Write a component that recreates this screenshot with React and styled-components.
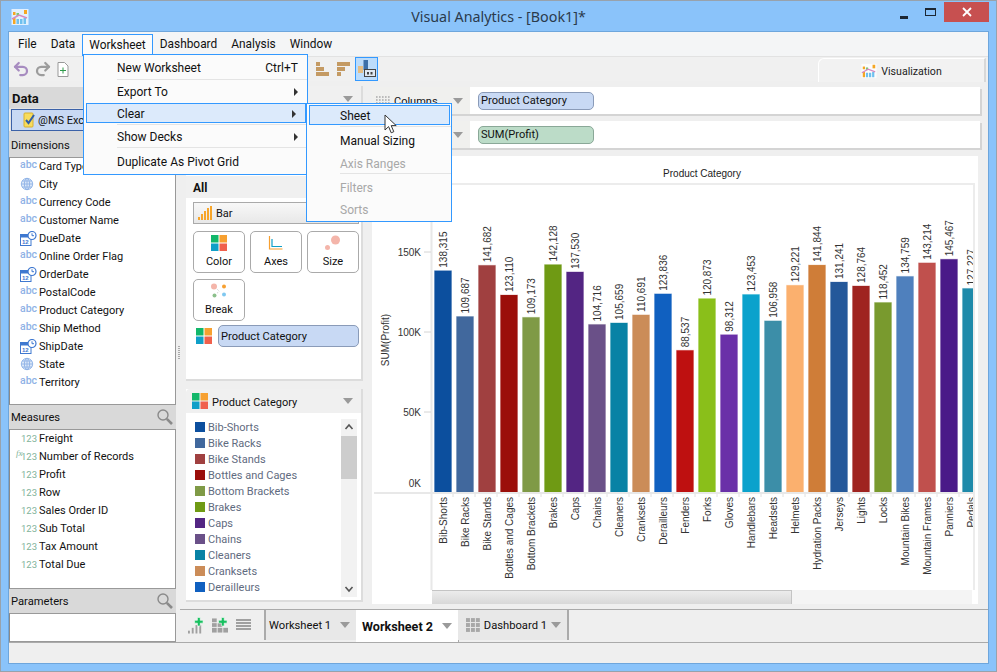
import React from "react";
import styled, { createGlobalStyle } from "styled-components";
import { Undo2, Redo2 } from "lucide-react";

const GlobalStyle = createGlobalStyle`
  html, body {
    margin: 0;
    padding: 0;
    background: #8ac3fa;
  }
  * {
    box-sizing: border-box;
  }
`;

const Frame = styled.div`
  position: relative;
  width: 997px;
  height: 672px;
  overflow: hidden;
  display: flex;
  flex-direction: column;
  background: #8ac3fa;
  border: 1px solid #98a2ac;
  font-family: Roboto, "Liberation Sans", sans-serif;
  font-size: 11.5px;
  color: #111;
`;

const TitleBar = styled.div`
  position: relative;
  height: 30px;
  flex: none;
  display: flex;
  align-items: center;
  justify-content: center;
  font-family: "Noto Sans", sans-serif;
  font-size: 14.3px;
  color: #2a3a4c;
  padding-top: 1px;
`;

const AppLogo = styled.div`
  position: absolute;
  left: 10px;
  top: 7px;
  display: flex;
`;

const WindowButtons = styled.div`
  position: absolute;
  right: 7px;
  top: 1px;
  display: flex;
  align-items: center;
`;

const MinButton = styled.div`
  width: 8px;
  height: 3px;
  background: #1c2733;
  margin: 10px 17px 0 0;
`;

const MaxButton = styled.div`
  width: 11px;
  height: 8px;
  border: 1px solid #1c2733;
  border-top-width: 2px;
  margin-right: 8px;
`;

const CloseButton = styled.div`
  width: 45px;
  height: 20px;
  background: #c75050;
  display: flex;
  align-items: center;
  justify-content: center;
`;

const Content = styled.div`
  flex: none;
  width: 981px;
  height: 633px;
  margin-left: 7px;
  border: 1px solid #6ea6dc;
  background: #efefef;
  display: flex;
  flex-direction: column;
`;

const MenuBar = styled.div`
  height: 25px;
  flex: none;
  display: flex;
  background: #f4f5f6;
  border-bottom: 1px solid #e2e2e2;
  padding-left: 2px;
`;

const MenuItem = styled.div`
  height: ${(p) => (p.$open ? "22px" : "24px")};
  margin-top: ${(p) => (p.$open ? "2px" : "0")};
  padding: ${(p) => (p.$open ? "3px 6px 0" : "5px 7px 0")};
  border: ${(p) => (p.$open ? "1px solid #3399ff" : "none")};
  border-bottom: none;
  background: ${(p) => (p.$open ? "#fbfbfb" : "transparent")};
  font-size: 11.9px;
`;

const Toolbar = styled.div`
  height: 24px;
  flex: none;
  display: flex;
  align-items: center;
  padding-left: 3px;
  background: #f0f0f0;
  position: relative;
`;

const ToolIcon = styled.div`
  display: flex;
  align-items: center;
  justify-content: center;
  margin-left: ${(p) => p.$gap || 0}px;
  width: ${(p) => p.$w || 16}px;
  height: ${(p) => p.$h || 16}px;
  border: ${(p) => (p.$active ? "1px solid #3399ff" : "none")};
  background: ${(p) => (p.$active ? "#bcdcfb" : "transparent")};
`;

const VisTab = styled.div`
  position: absolute;
  right: 2px;
  top: 1px;
  width: 168px;
  height: 24px;
  border: 1px solid #fff;
  border-bottom: none;
  border-right: 2px solid #d8d8d8;
  border-top-left-radius: 6px;
  background: #f2f2f2;
  display: flex;
  align-items: center;
  justify-content: center;
  gap: 4px;
  padding-top: 1px;
  font-size: 10.6px;
  color: #222;
`;

const Body = styled.div`
  height: 561px;
  flex: none;
  display: flex;
`;

const LeftColumn = styled.div`
  width: 167px;
  flex: none;
  display: flex;
  flex-direction: column;
  padding-top: 6px;
`;

const DataHeader = styled.div`
  height: 22px;
  flex: none;
  background: #d9d9d9;
  font-weight: 700;
  font-size: 13px;
  padding: 4px 3px;
`;

const SourceRow = styled.div`
  height: 22px;
  flex: none;
  margin: 0 0 0 2px;
  padding-left: 11px;
  display: flex;
  align-items: center;
  gap: 3px;
  background: #c8d9f4;
  border: 1px solid #3c62a8;
  outline: 1px solid #e4e4e4;
  font-size: 11px;
`;

const PanelHeader = styled.div`
  height: ${(p) => p.$h}px;
  flex: none;
  background: #d9d9d9;
  display: flex;
  align-items: center;
  justify-content: space-between;
  padding: ${(p) => p.$pt || 0}px 2px 0;
  font-size: 11.2px;
`;

const FieldList = styled.div`
  height: ${(p) => p.$h}px;
  flex: none;
  background: #fff;
  border: 1px solid #999;
  border-left-color: #8a8a8a;
`;

const Field = styled.div`
  height: 18px;
  padding-bottom: 2px;
  display: flex;
  align-items: center;
  font-size: 11px;
  white-space: nowrap;
`;

const FieldIconBox = styled.div`
  width: 29px;
  flex: none;
  padding-left: 10px;
  display: flex;
  align-items: center;
  position: relative;
`;

const TypeMark = styled.span`
  font-size: ${(p) => (p.$num ? "9.5px" : "10.5px")};
  line-height: 1;
  font-weight: ${(p) => (p.$num ? 400 : 500)};
  color: ${(p) => (p.$num ? "#7fb39a" : "#8fb2e6")};
  margin-left: ${(p) => (p.$num ? "1px" : "0")};
  margin-top: ${(p) => (p.$num ? "1px" : "-1px")};
`;

const FxMark = styled.span`
  position: absolute;
  left: 6px;
  top: -3px;
  font-family: "Liberation Serif", serif;
  font-style: italic;
  font-size: 9px;
  color: #7fb39a;
`;

const WorkArea = styled.div`
  flex: 1;
  min-width: 0;
  display: flex;
  flex-direction: column;
  margin-left: 4px;
`;

const Main = styled.div`
  height: 528px;
  flex: none;
  display: flex;
`;

const Splitter = styled.div`
  width: 6px;
  flex: none;
  display: flex;
  align-items: center;
  padding-bottom: 4px;
`;

const Grip = styled.div`
  width: 2px;
  height: 14px;
  margin-top: 20px;
  margin-left: -2px;
  background: repeating-linear-gradient(to bottom, #aaa 0 1px, transparent 1px 2px);
`;

const MiddleColumn = styled.div`
  width: 177px;
  flex: none;
  display: flex;
  flex-direction: column;
  padding-top: 5px;
`;

const Panel = styled.div`
  background: #fff;
  height: ${(p) => p.$h}px;
  flex: none;
  margin-bottom: ${(p) => p.$mb || 0}px;
  border-right: 2px solid #dcdcdc;
  border-bottom: 2px solid #dcdcdc;
`;

const UpperHeader = styled.div`
  height: 26px;
  background: #f0f0f0;
  display: flex;
  justify-content: flex-end;
  align-items: center;
  padding-right: 8px;
`;

const Caret = styled.div`
  width: 0;
  height: 0;
  flex: none;
  border-left: 5px solid transparent;
  border-right: 5px solid transparent;
  border-top: 6px solid #9a9a9a;
`;

const MarksHeader = styled.div`
  height: 22px;
  margin-top: 2px;
  background: #f0f0f0;
  font-weight: 700;
  font-size: 12px;
  padding: 5px 7px 0;
`;

const MarkBody = styled.div`
  padding: 4px 2px 0 7px;
`;

const TypeSelect = styled.div`
  height: 22px;
  border: 1px solid #aaa;
  background: linear-gradient(#f8f8f8, #e8e8e8);
  display: flex;
  align-items: center;
  gap: 4px;
  padding-left: 4px;
  font-size: 11px;
`;

const MarkGrid = styled.div`
  display: grid;
  grid-template-columns: repeat(3, 52px);
  column-gap: 5px;
  row-gap: 6px;
  margin-top: 7px;
`;

const MarkButton = styled.div`
  height: 42px;
  border: 1px solid #aaa;
  border-radius: 5px;
  background: #fff;
  display: flex;
  flex-direction: column;
  align-items: center;
  padding-top: 3px;
  font-size: 11px;
  line-height: 14px;
  gap: 4px;
`;

const EncodingRow = styled.div`
  display: flex;
  align-items: center;
  gap: 6px;
  margin: 4px 0 0 3px;
`;

const Pill = styled.div`
  height: ${(p) => p.$h || 18}px;
  width: ${(p) => p.$w}px;
  flex: none;
  border: 1px solid ${(p) => (p.$green ? "#8aa898" : "#8a9bb8")};
  border-radius: 5px;
  background: ${(p) => (p.$green ? "#bcdcc8" : "#c8d9f4")};
  padding-left: 2px;
  display: flex;
  align-items: center;
  font-size: 11.1px;
  white-space: nowrap;
`;

const LegendHeader = styled.div`
  height: 24px;
  background: #f0f0f0;
  display: flex;
  align-items: center;
  gap: 4px;
  padding: 0 8px 0 6px;
  border-top-left-radius: 4px;
`;

const LegendTitle = styled.span`
  flex: 1;
  font-size: 11px;
  padding-top: 2px;
`;

const LegendBody = styled.div`
  display: flex;
  padding: 6px 4px 0 9px;
`;

const LegendList = styled.div`
  flex: 1;
`;

const LegendItem = styled.div`
  height: 16px;
  display: flex;
  align-items: center;
  gap: 3px;
  font-size: 11px;
  color: #5f6b80;
`;

const Swatch = styled.div`
  width: 10px;
  height: 10px;
  flex: none;
  background: ${(p) => p.$color};
`;

const LegendScroll = styled.div`
  width: 16px;
  height: 178px;
  flex: none;
  background: #f2f2f2;
  display: flex;
  flex-direction: column;
  align-items: center;
  justify-content: space-between;
  position: relative;
`;

const ScrollThumb = styled.div`
  position: absolute;
  left: 0;
  top: 17px;
  width: 16px;
  height: 43px;
  background: #cdcdcd;
`;

const ChartColumn = styled.div`
  width: 610px;
  flex: none;
  margin-left: 9px;
  padding-top: 6px;
  display: flex;
  flex-direction: column;
  gap: 7px;
`;

const Shelf = styled.div`
  height: 27px;
  flex: none;
  margin-right: 2px;
  background: #fff;
  display: flex;
  align-items: center;
  box-shadow: 2px 2px 0 #d4d4d4;
`;

const ShelfLabel = styled.div`
  width: 98px;
  height: 100%;
  flex: none;
  background: #f0f0ee;
  display: flex;
  align-items: center;
  padding: 0 7px 0 4px;
  gap: 4px;
  margin-right: 8px;
`;

const ShelfName = styled.span`
  flex: 1;
  font-size: 11px;
  padding-top: 2px;
`;

const ChartPanel = styled.div`
  width: 606px;
  height: 448px;
  margin-top: 1px;
  flex: none;
  background: #fff;
  display: flex;
  flex-direction: column;
`;

const ChartSvg = styled.svg`
  display: block;
  flex: none;
  font-family: "Liberation Sans", Arial, sans-serif;
`;

const HScroll = styled.div`
  height: 14px;
  margin: 0 6px 0 60px;
  background: #f4f4f4;
`;

const HThumb = styled.div`
  width: 360px;
  height: 14px;
  background: linear-gradient(#ececec, #d8d8d8);
  border-top: 1px solid #c4c4c4;
  border-right: 1px solid #c4c4c4;
`;

const TabBar = styled.div`
  height: 33px;
  flex: none;
  display: flex;
  align-items: stretch;
  border-top: 1px solid #aaa;
  padding-left: 8px;
  background: #efefef;
`;

const TabTools = styled.div`
  display: flex;
  align-items: center;
  gap: 8px;
  width: 76px;
  padding-bottom: 2px;
  flex: none;
`;

const Tab = styled.div`
  height: ${(p) => (p.$active ? "32px" : "30px")};
  display: flex;
  align-items: center;
  gap: ${(p) => p.$gap || 0}px;
  width: ${(p) => p.$w}px;
  flex: none;
  padding: 0 6px 0 ${(p) => p.$pl || 3}px;
  background: ${(p) => (p.$active ? "#fff" : "#e8e8e8")};
  font-weight: ${(p) => (p.$active ? 700 : 400)};
  font-size: ${(p) => (p.$active ? "12.6px" : "11.2px")};
  white-space: nowrap;
  border-left: ${(p) => (p.$divider ? "2px solid #aaa" : "none")};
  border-right: ${(p) => (p.$end ? "2px solid #aaa" : "none")};
  box-shadow: ${(p) => (p.$active ? "1px 1px 0 #aaa" : "none")};
`;

const TabName = styled.span`
  flex: 1;
`;

const StatusBar = styled.div`
  flex: 1;
  border-top: 1px solid #aaa;
  background: #efefef;
`;

const DropMenu = styled.div`
  position: absolute;
  left: ${(p) => p.$x}px;
  top: ${(p) => p.$y}px;
  width: ${(p) => p.$w}px;
  height: ${(p) => p.$h}px;
  background: #fbfbfb;
  border: 1px solid #3399ff;
  z-index: 5;
`;

const DropItem = styled.div`
  height: ${(p) => p.$h}px;
  margin: ${(p) => (p.$hot ? "1px 1px 1px 2px" : "0")};
  padding: 2px 9px 0 ${(p) => (p.$hot ? p.$indent - 3 : p.$indent)}px;
  display: flex;
  align-items: center;
  justify-content: space-between;
  font-size: 12px;
  color: ${(p) => (p.$off ? "#a8a8a8" : "#111")};
  background: ${(p) => (p.$hot ? "#dceafb" : "transparent")};
  border: ${(p) => (p.$hot ? "1px solid #3399ff" : "none")};
`;

const DropLine = styled.div`
  height: 1px;
  background: #e4e4e4;
  margin-left: ${(p) => p.$indent}px;
`;

const SubArrow = styled.div`
  width: 0;
  height: 0;
  border-top: 4px solid transparent;
  border-bottom: 4px solid transparent;
  border-left: 4px solid #333;
`;

const Pointer = styled.svg`
  position: absolute;
  left: 383px;
  top: 113px;
  z-index: 6;
`;

const dimensions = [
  ["abc", "Card Type"],
  ["globe", "City"],
  ["abc", "Currency Code"],
  ["abc", "Customer Name"],
  ["date", "DueDate"],
  ["abc", "Online Order Flag"],
  ["date", "OrderDate"],
  ["abc", "PostalCode"],
  ["abc", "Product Category"],
  ["abc", "Ship Method"],
  ["date", "ShipDate"],
  ["globe", "State"],
  ["abc", "Territory"],
];

const measures = ["Freight", "Number of Records", "Profit", "Row", "Sales Order ID", "Sub Total", "Tax Amount", "Total Due"];

const categories = [
  ["Bib-Shorts", 138315, "#0c4f9e"],
  ["Bike Racks", 109687, "#41689d"],
  ["Bike Stands", 141682, "#a04040"],
  ["Bottles and Cages", 123110, "#9b0e0a"],
  ["Bottom Brackets", 109173, "#7f9a46"],
  ["Brakes", 142128, "#6f9a14"],
  ["Caps", 137530, "#532583"],
  ["Chains", 104716, "#6a5088"],
  ["Cleaners", 105659, "#0882a5"],
  ["Cranksets", 110691, "#cb8c58"],
  ["Derailleurs", 123836, "#1060c0"],
  ["Fenders", 88537, "#be1010"],
  ["Forks", 120873, "#8abf1a"],
  ["Gloves", 98312, "#6a30a8"],
  ["Handlebars", 123453, "#0ba2cc"],
  ["Headsets", 106958, "#3c8ea8"],
  ["Helmets", 129221, "#fbb06e"],
  ["Hydration Packs", 141844, "#cf7d38"],
  ["Jerseys", 131241, "#24589a"],
  ["Lights", 128764, "#9f2420"],
  ["Locks", 118452, "#799a2e"],
  ["Mountain Bikes", 134759, "#4f80bd"],
  ["Mountain Frames", 143214, "#c0504d"],
  ["Panniers", 145467, "#4a1a88"],
  ["Pedals", 127227, "#1f8aaa"],
];

const LogoIcon = ({ size = 18 }) => (
  <svg width={size} height={size} viewBox="0 0 18 18">
    <rect x="0.5" y="1" width="17" height="16" fill="#fff" opacity="0.75" />
    <rect x="2" y="10" width="2.5" height="6" fill="#f5a623" />
    <rect x="5.5" y="5" width="2.5" height="3" fill="#7cc576" />
    <rect x="5.5" y="11" width="2.5" height="5" fill="#6fc0ee" />
    <rect x="9" y="11" width="2.5" height="5" fill="#6fc0ee" />
    <rect x="12.5" y="10" width="2.5" height="6" fill="#6fc0ee" />
    <rect x="13" y="2" width="3" height="4" fill="#f5a623" />
    <rect x="2" y="4" width="2.5" height="3" fill="#f5a623" />
    <path d="M1 11 L8 7 L16 10" stroke="#d58ac0" strokeWidth="1.5" fill="none" />
  </svg>
);

const GlobeIcon = () => (
  <svg width="14" height="14" viewBox="0 0 14 14" fill="none" stroke="#8fb2e6" strokeWidth="0.9">
    <circle cx="7" cy="7" r="5.7" fill="#dce8f8" />
    <ellipse cx="7" cy="7" rx="2.6" ry="5.7" />
    <path d="M1.3 7h11.4M2 4h10M2 10h10M7 1.3v11.4" />
  </svg>
);

const DateIcon = () => (
  <svg width="17" height="15" viewBox="0 0 17 15">
    <rect x="0.5" y="3.5" width="10.5" height="11" fill="#fff" stroke="#3f78d0" />
    <rect x="0.5" y="3.5" width="10.5" height="3" fill="#3f78d0" />
    <text x="2" y="13" fontSize="6" fontWeight="700" fill="#3f78d0" fontFamily="Liberation Sans">12</text>
    <circle cx="12" cy="4.5" r="4" fill="#fff" stroke="#3f78d0" strokeWidth="1.2" />
    <path d="M12 2.3v2.4h2" stroke="#3f78d0" fill="none" />
  </svg>
);

const SearchIcon = () => (
  <svg width="18" height="18" viewBox="0 0 18 18" fill="none" stroke="#8a8a8a">
    <circle cx="7" cy="7" r="5" strokeWidth="1.4" />
    <path d="M10.8 10.8 L16 16" strokeWidth="2.6" />
  </svg>
);

const QuadIcon = ({ size = 16 }) => {
  const cell = size / 2 - 0.5;
  return (
    <svg width={size} height={size} viewBox={`0 0 ${size} ${size}`}>
      <rect x="0" y="0" width={cell} height={cell} fill="#12b76a" />
      <rect x={size - cell} y="0" width={cell} height={cell} fill="#f7a030" />
      <rect x="0" y={size - cell} width={cell} height={cell} fill="#0f9fc8" />
      <rect x={size - cell} y={size - cell} width={cell} height={cell} fill="#f0604c" />
    </svg>
  );
};

const AxesIcon = () => (
  <svg width="16" height="16" viewBox="0 0 16 16" fill="none">
    <path d="M1.5 1v13h13" stroke="#f7a030" strokeWidth="1.2" />
    <path d="M4 4v7.5h10" stroke="#0f9fc8" strokeWidth="1.2" />
  </svg>
);

const SizeIcon = () => (
  <svg width="16" height="16" viewBox="0 0 16 16" fill="#f4b5aa">
    <circle cx="10.5" cy="5" r="4.5" />
    <circle cx="2.5" cy="12.5" r="2.5" />
  </svg>
);

const BreakIcon = () => (
  <svg width="16" height="16" viewBox="0 0 16 16">
    <circle cx="3" cy="3.5" r="3" fill="#f4b5aa" />
    <circle cx="13" cy="3.5" r="2" fill="#f7a030" />
    <circle cx="3.5" cy="12.5" r="2" fill="#8cc08c" />
    <circle cx="13" cy="11.5" r="2" fill="#80c8f0" />
    <path d="M6 6l3 3M6 10l2-1" stroke="#bbb" strokeWidth="0.7" strokeDasharray="1 1" />
  </svg>
);

const BarTypeIcon = () => (
  <svg width="14" height="14" viewBox="0 0 14 14" fill="#f7a52a">
    <rect x="0" y="11" width="2" height="3" />
    <rect x="3" y="8" width="2" height="6" />
    <rect x="6" y="5" width="2" height="9" />
    <rect x="9" y="2" width="2" height="12" />
    <rect x="12" y="0" width="2" height="14" />
  </svg>
);

const SourceIcon = () => (
  <svg width="12" height="16" viewBox="0 0 12 16">
    <rect x="1" y="1" width="9" height="14" rx="1" fill="#f8dc5c" stroke="#d8b030" />
    <path d="M3 8l2.5 3L11 3" stroke="#2f5ea8" strokeWidth="2" fill="none" />
  </svg>
);

const BrandBars = ({ flip }) => (
  <svg width="14" height="14" viewBox="0 0 14 14" fill="#c49a63">
    {flip ? (
      <>
        <rect x="0" y="0" width="13" height="4" />
        <rect x="0" y="5" width="8" height="4" />
        <rect x="0" y="10" width="4" height="4" />
      </>
    ) : (
      <>
        <rect x="0" y="0" width="4" height="4" />
        <rect x="0" y="5" width="8" height="4" />
        <rect x="0" y="10" width="13" height="4" />
      </>
    )}
  </svg>
);

const SortLabelIcon = () => (
  <svg width="18" height="18" viewBox="0 0 18 18">
    <rect x="0" y="6" width="5" height="7" fill="#e4bd84" />
    <rect x="5.5" y="0" width="4.5" height="10" fill="#3d6fa8" />
    <rect x="6.5" y="9.5" width="11" height="7" fill="#dfe8f2" stroke="#444" />
    <rect x="9" y="12" width="2" height="2.5" fill="#444" />
    <rect x="12.5" y="12" width="2" height="2.5" fill="#444" />
  </svg>
);

const NewDocIcon = () => (
  <svg width="12" height="15" viewBox="0 0 12 15" fill="none">
    <path d="M1 .5h6.5L11 4v10.5H1z" fill="#fff" stroke="#999" />
    <path d="M6 5.5v6M3 8.5h6" stroke="#2e9a4a" />
  </svg>
);

const GridDots = () => (
  <svg width="14" height="10" viewBox="0 0 14 10" fill="#bbb">
    {[0, 3, 6, 9, 12].map((x) =>
      [0, 3, 6, 9].map((y) => <rect key={`${x}${y}`} x={x} y={y} width="1.6" height="2" />)
    )}
  </svg>
);

const PlusBadge = () => (
  <path d="M10 0h3v3h3v3h-3v3h-3V6H7V3h3z" fill="#18c060" stroke="#fff" strokeWidth="0.6" />
);

const AddChartIcon = () => (
  <svg width="16" height="17" viewBox="0 0 17 17" fill="#a0a0a0">
    <rect x="0" y="14" width="2" height="3" />
    <rect x="4" y="11" width="2" height="6" />
    <rect x="8" y="8" width="2" height="9" />
    <rect x="12" y="8" width="2" height="9" />
    <PlusBadge />
  </svg>
);

const AddDashIcon = () => (
  <svg width="16" height="17" viewBox="0 0 17 17" fill="#a0a0a0">
    <rect x="0" y="1" width="5" height="4" />
    <rect x="0" y="6" width="5" height="4" />
    <rect x="6" y="6" width="5" height="4" />
    <rect x="0" y="11" width="5" height="5" />
    <rect x="6" y="11" width="5" height="5" />
    <rect x="12" y="11" width="5" height="5" />
    <PlusBadge />
  </svg>
);

const ListIcon = () => (
  <svg width="15" height="12" viewBox="0 0 15 12" fill="#a0a0a0">
    {[0, 3, 6, 9].map((y) => <rect key={y} x="0" y={y} width="15" height="2" />)}
  </svg>
);

const DashIcon = () => (
  <svg width="14" height="14" viewBox="0 0 14 14" fill="#a8a8a8">
    {[0, 5, 10].map((x) =>
      [0, 5, 10].map((y) => <rect key={`${x}${y}`} x={x} y={y} width="4" height="4" />)
    )}
  </svg>
);

const Chevron = ({ up }) => (
  <svg width="10" height="16" viewBox="0 0 10 16" fill="none" stroke="#555" strokeWidth="1.6">
    <path d={up ? "M1.5 10l3.5-4 3.5 4" : "M1.5 6l3.5 4 3.5-4"} />
  </svg>
);

const Chart = () => {
  const base = 492;
  const scale = 80 / 50000;
  return (
    <ChartSvg width="606" height="434" viewBox="372 156 606 434">
      <defs>
        <clipPath id="plot">
          <rect x="372" y="183" width="601" height="410" />
        </clipPath>
      </defs>
      <text x="702" y="177" fontSize="10" textAnchor="middle" fill="#222">Product Category</text>
      <path d="M431 184H974" stroke="#ececec" strokeWidth="2" />
      <path d="M431.5 183V590" stroke="#e8e8e8" strokeWidth="2" />
      <path d="M974 183V590" stroke="#ececec" strokeWidth="2" />
      {[[150, 252], [100, 332], [50, 412]].map(([v, y]) => (
        <g key={v}>
          <path d={`M424 ${y}H431`} stroke="#d4d4d4" />
          <text x="421" y={y + 3.5} fontSize="10" textAnchor="end" fill="#333">{v}K</text>
        </g>
      ))}
      <text x="421" y="487" fontSize="10" textAnchor="end" fill="#333">0K</text>
      <text transform="rotate(-90 389 340)" x="389" y="340" fontSize="10" textAnchor="middle" fill="#333">SUM(Profit)</text>
      <g clipPath="url(#plot)">
        {categories.map(([name, value, color], i) => {
          const x = 434.5 + 22 * i;
          const h = value * scale;
          const cx = x + 8.5;
          return (
            <g key={name}>
              <rect x={x} y={base - h} width="17" height={h} fill={color} stroke={color} strokeOpacity="0.25" />
              <text
                transform={`rotate(-90 ${cx + 4} ${base - h - 3})`}
                x={cx + 4}
                y={base - h - 3}
                fontSize="10"
                fill="#333"
              >
                {value.toLocaleString("en-US")}
              </text>
              <path d={`M${x + 18.5} 493V497`} stroke="#e0e0e0" />
              <text
                transform={`rotate(-90 ${cx + 4} 497)`}
                x={cx + 4}
                y="497"
                fontSize="10"
                textAnchor="end"
                fill="#333"
              >
                {name}
              </text>
            </g>
          );
        })}
      </g>
      <path d="M374 493H973" stroke="#e8e8e8" strokeWidth="2" />
    </ChartSvg>
  );
};

const Legend = () => (
  <LegendList>
    {categories.slice(0, 11).map(([name, , color]) => (
      <LegendItem key={name}>
        <Swatch $color={color} />
        {name}
      </LegendItem>
    ))}
  </LegendList>
);

export default function App() {
  return (
    <>
      <GlobalStyle />
      <Frame>
        <TitleBar>
          <AppLogo><LogoIcon /></AppLogo>
          Visual Analytics - [Book1]*
          <WindowButtons>
            <MinButton />
            <MaxButton />
            <CloseButton>
              <svg width="10" height="10" viewBox="0 0 10 10" stroke="#fff" strokeWidth="1.8">
                <path d="M1 1l8 8M9 1l-8 8" />
              </svg>
            </CloseButton>
          </WindowButtons>
        </TitleBar>
        <Content>
          <MenuBar>
            <MenuItem>File</MenuItem>
            <MenuItem>Data</MenuItem>
            <MenuItem $open>Worksheet</MenuItem>
            <MenuItem>Dashboard</MenuItem>
            <MenuItem>Analysis</MenuItem>
            <MenuItem>Window</MenuItem>
          </MenuBar>
          <Toolbar>
            <ToolIcon $w={18}><Undo2 size={18} color="#a78cc0" strokeWidth={3} /></ToolIcon>
            <ToolIcon $gap={4} $w={18}><Redo2 size={18} color="#9c9c9c" strokeWidth={3} /></ToolIcon>
            <ToolIcon $gap={5} $w={12}><NewDocIcon /></ToolIcon>
            <ToolIcon $gap={246}><BrandBars /></ToolIcon>
            <ToolIcon $gap={5}><BrandBars flip /></ToolIcon>
            <ToolIcon $gap={3} $w={23} $h={24} $active><SortLabelIcon /></ToolIcon>
            <VisTab><LogoIcon size={16} />Visualization</VisTab>
          </Toolbar>
          <Body>
            <LeftColumn>
              <DataHeader>Data</DataHeader>
              <SourceRow><SourceIcon />@MS Excel</SourceRow>
              <PanelHeader $h={26} $pt={2}>Dimensions</PanelHeader>
              <FieldList $h={248}>
                {dimensions.map(([type, name]) => (
                  <Field key={name}>
                    <FieldIconBox>
                      {type === "abc" && <TypeMark>abc</TypeMark>}
                      {type === "globe" && <GlobeIcon />}
                      {type === "date" && <DateIcon />}
                    </FieldIconBox>
                    {name}
                  </Field>
                ))}
              </FieldList>
              <PanelHeader $h={24}>Measures<SearchIcon /></PanelHeader>
              <FieldList $h={160}>
                {measures.map((name) => (
                  <Field key={name}>
                    <FieldIconBox>
                      {name === "Number of Records" && <FxMark>fx</FxMark>}
                      <TypeMark $num>123</TypeMark>
                    </FieldIconBox>
                    {name}
                  </Field>
                ))}
              </FieldList>
              <PanelHeader $h={24}>Parameters<SearchIcon /></PanelHeader>
              <FieldList $h={29} />
            </LeftColumn>
            <WorkArea>
              <Main>
                <Splitter><Grip /></Splitter>
                <MiddleColumn>
                  <Panel $h={84} $mb={4}>
                    <UpperHeader><Caret /></UpperHeader>
                  </Panel>
                  <Panel $h={207} $mb={8}>
                    <MarksHeader>All</MarksHeader>
                    <MarkBody>
                      <TypeSelect><BarTypeIcon />Bar</TypeSelect>
                      <MarkGrid>
                        <MarkButton><QuadIcon />Color</MarkButton>
                        <MarkButton><AxesIcon />Axes</MarkButton>
                        <MarkButton><SizeIcon />Size</MarkButton>
                        <MarkButton><BreakIcon />Break</MarkButton>
                      </MarkGrid>
                      <EncodingRow>
                        <QuadIcon />
                        <Pill $w={141} $h={22}>Product Category</Pill>
                      </EncodingRow>
                    </MarkBody>
                  </Panel>
                  <Panel $h={213}>
                    <LegendHeader>
                      <QuadIcon />
                      <LegendTitle>Product Category</LegendTitle>
                      <Caret />
                    </LegendHeader>
                    <LegendBody>
                      <Legend />
                      <LegendScroll>
                        <Chevron up />
                        <ScrollThumb />
                        <Chevron />
                      </LegendScroll>
                    </LegendBody>
                  </Panel>
                </MiddleColumn>
                <ChartColumn>
                  <Shelf>
                    <ShelfLabel>
                      <GridDots />
                      <ShelfName>Columns</ShelfName>
                      <Caret />
                    </ShelfLabel>
                    <Pill $w={116}>Product Category</Pill>
                  </Shelf>
                  <Shelf>
                    <ShelfLabel>
                      <GridDots />
                      <ShelfName />
                      <Caret />
                    </ShelfLabel>
                    <Pill $w={116} $green>SUM(Profit)</Pill>
                  </Shelf>
                  <ChartPanel>
                    <Chart />
                    <HScroll><HThumb /></HScroll>
                  </ChartPanel>
                </ChartColumn>
              </Main>
              <TabBar>
                <TabTools>
                  <AddChartIcon />
                  <AddDashIcon />
                  <ListIcon />
                </TabTools>
                <Tab $w={92} $divider><TabName>Worksheet 1</TabName><Caret /></Tab>
                <Tab $w={102} $pl={6} $active><TabName>Worksheet 2</TabName><Caret /></Tab>
                <Tab $w={111} $pl={8} $gap={4} $end><DashIcon /><TabName>Dashboard 1</TabName><Caret /></Tab>
              </TabBar>
            </WorkArea>
          </Body>
          <StatusBar />
        </Content>
        <DropMenu $x={82} $y={53} $w={225} $h={121}>
          <DropItem $h={24} $indent={33}>New Worksheet<span>Ctrl+T</span></DropItem>
          <DropLine $indent={33} />
          <DropItem $h={22} $indent={33}>Export To<SubArrow /></DropItem>
          <DropItem $h={20} $indent={33} $hot>Clear<SubArrow /></DropItem>
          <DropLine $indent={33} />
          <DropItem $h={22} $indent={33}>Show Decks<SubArrow /></DropItem>
          <DropLine $indent={33} />
          <DropItem $h={25} $indent={33}>Duplicate As Pivot Grid</DropItem>
        </DropMenu>
        <DropMenu $x={305} $y={102} $w={146} $h={119}>
          <DropItem $h={20} $indent={33} $hot>Sheet</DropItem>
          <DropLine $indent={33} />
          <DropItem $h={25} $indent={33}>Manual Sizing</DropItem>
          <DropItem $h={21} $indent={33} $off>Axis Ranges</DropItem>
          <DropLine $indent={33} />
          <DropItem $h={25} $indent={33} $off>Filters</DropItem>
          <DropItem $h={19} $indent={33} $off>Sorts</DropItem>
        </DropMenu>
        <Pointer width="14" height="21" viewBox="0 0 14 21">
          <path d="M1 1v15l3.6-3.4 2.6 6.2 2.6-1.1-2.6-6.1h5z" fill="#fff" stroke="#333" strokeWidth="1" />
        </Pointer>
      </Frame>
    </>
  );
}
